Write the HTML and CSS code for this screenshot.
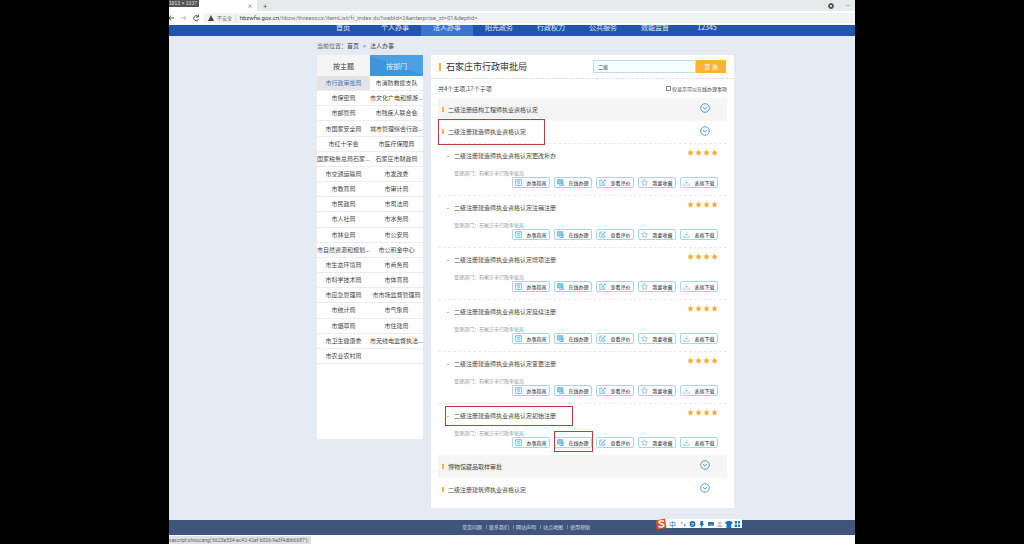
FILE: index.html
```html
<!DOCTYPE html>
<html lang="zh-CN">
<head>
<meta charset="utf-8">
<title>法人办事</title>
<link rel="stylesheet" href="styles.css">
</head>
<body>
<svg class="defs" aria-hidden="true">
  <symbol id="down" viewBox="0 0 20 20"><circle cx="10" cy="10" r="8.6" fill="none" stroke="#4b93cf" stroke-width="1.8"/><path d="M6 8.5l4 3.6 4-3.6" fill="none" stroke="#4b93cf" stroke-width="1.8"/></symbol>
  <symbol id="star" viewBox="0 0 20 20"><path d="M10 1l2.8 6 6.4.8-4.7 4.4 1.2 6.5-5.7-3.2-5.7 3.2 1.2-6.5L.8 7.8 7.2 7z" fill="#f0b040"/></symbol>
  <symbol id="guide" viewBox="0 0 20 20"><rect x="2" y="2" width="16" height="16" fill="none" stroke="#52b4df" stroke-width="2"/><path d="M6 2v5h8V2M6 11h8M6 14h8" fill="none" stroke="#52b4df" stroke-width="2"/></symbol>
  <symbol id="online" viewBox="0 0 20 20"><rect x="1" y="2" width="16" height="12" fill="#8fcdec" stroke="#52b4df" stroke-width="2"/><path d="M6 18h12M12 9l6 5v4" fill="none" stroke="#3ea2d8" stroke-width="2.4"/></symbol>
  <symbol id="review" viewBox="0 0 20 20"><path d="M11 3H2v15h14v-6M18 2L8 12l-2 4M4 6h5M12 15h4M16 1l3 3-9 9" fill="none" stroke="#52b4df" stroke-width="2"/></symbol>
  <symbol id="fav" viewBox="0 0 20 20"><path d="M10 1.5l2.6 5.6 6.1.7-4.5 4.2 1.2 6.2-5.4-3-5.4 3 1.2-6.2L1.3 7.8l6.1-.7z" fill="none" stroke="#52b4df" stroke-width="1.8"/></symbol>
  <symbol id="load" viewBox="0 0 20 20"><path d="M10 2v11M6 9l4 4 4-4M2 12v6h16v-6" fill="none" stroke="#72c2e4" stroke-width="1.8"/></symbol>
</svg>
<div class="screen">
  <header class="browser">
    <div class="tabs">
      <div class="tab"><button class="glyph close" aria-label="关闭">×</button></div>
      <button class="glyph plus" aria-label="新标签页">+</button>
      <svg class="win" viewBox="0 0 26 8"><circle cx="2" cy="4" r="2" fill="none" stroke="#555" stroke-width="1.800"/><path d="M17 3.500h4" stroke="#bbb"/></svg>
      <span class="size">1813 × 1037</span>
    </div>
    <div class="toolbar">
      <svg class="arrows" viewBox="0 0 34 10"><path d="M5 5H0M2 2.500L0 5l2 2.500" fill="none" stroke="#555"/><path d="M12 5h5M15 2.500L17 5l-2 2.500" fill="none" stroke="#bbb"/><path d="M29 3.500A2.500 2.500 0 1 0 29.500 6M29.500 1.500v2.500h-2.500" fill="none" stroke="#555"/></svg>
      <div class="address">
        <svg class="warn" viewBox="0 0 6 6"><path d="M3 0l3 6H0z" fill="#444"/></svg>
        <span class="safe">不安全</span><span class="bar">|</span>
        <span class="url"><b>hbzwfw.gov.cn</b>/hbzw/threesxcx/itemList/fr_index.do?webId=2&amp;enterprise_zt=01&amp;deptid=</span>
      </div>
    </div>
  </header>
  <nav class="nav">
    <a href="#">首页</a><a href="#">个人办事</a><a href="#" class="on">法人办事</a><a href="#">阳光政务</a><a href="#">行政权力</a><a href="#">公共服务</a><a href="#">效能监督</a><a href="#">12345</a>
  </nav>
  <main class="page">
    <div class="crumb">当前位置：<a href="#">首页</a><span class="sep">»</span><a href="#">法人办事</a></div>
    <div class="columns">
      <aside class="side">
        <div class="switch"><button>按主题</button><button class="on">按部门</button></div>
        <div class="depts">
          <a href="#" class="on">市行政审批局</a><a href="#">市消防救援支队</a>
          <a href="#">市保密局</a><a href="#">市文化广电和旅游...</a>
          <a href="#">市邮管局</a><a href="#">市残疾人联合会</a>
          <a href="#">市国家安全局</a><a href="#">城市管理综合行政...</a>
          <a href="#">市红十字会</a><a href="#">市医疗保障局</a>
          <a href="#">国家税务总局石家...</a><a href="#">石家庄市财政局</a>
          <a href="#">市交通运输局</a><a href="#">市发改委</a>
          <a href="#">市教育局</a><a href="#">市审计局</a>
          <a href="#">市民政局</a><a href="#">市司法局</a>
          <a href="#">市人社局</a><a href="#">市水务局</a>
          <a href="#">市林业局</a><a href="#">市公安局</a>
          <a href="#">市自然资源和规划...</a><a href="#">市公积金中心</a>
          <a href="#">市生态环境局</a><a href="#">市商务局</a>
          <a href="#">市科学技术局</a><a href="#">市体育局</a>
          <a href="#">市应急管理局</a><a href="#">市市场监督管理局</a>
          <a href="#">市统计局</a><a href="#">市气象局</a>
          <a href="#">市烟草局</a><a href="#">市住建局</a>
          <a href="#">市卫生健康委</a><a href="#">市无线电监督执法...</a>
          <a href="#">市农业农村局</a><span></span>
        </div>
      </aside>
      <section class="panel">
        <div class="head">
          <h1>石家庄市行政审批局</h1>
          <form class="search"><input type="text" value="二级" aria-label="事项名称"><button type="button">查 询</button></form>
        </div>
        <div class="body">
          <div class="info"><span>共4个主项,17个子项</span><label><input type="checkbox">仅显示可以在线办理事项</label></div>
          <div class="group shade"><h2>二级注册结构工程师执业资格认定</h2><svg><use href="#down"/></svg></div>
          <div class="group open"><h2>二级注册建造师执业资格认定</h2><svg><use href="#down"/></svg><i class="mark mark-group"></i></div>

          <article class="item">
            <div class="top"><h3>二级注册建造师执业资格认定更改补办</h3><div class="stars"><svg><use href="#star"/></svg><svg><use href="#star"/></svg><svg><use href="#star"/></svg><svg><use href="#star"/></svg></div></div>
            <p>受理部门：石家庄市行政审批局</p>
            <div class="acts"><button><svg><use href="#guide"/></svg>办事指南</button><button><svg><use href="#online"/></svg>在线办理</button><button><svg><use href="#review"/></svg>查看评价</button><button><svg><use href="#fav"/></svg>我要收藏</button><button><svg><use href="#load"/></svg>表格下载</button></div>
          </article>
          <article class="item">
            <div class="top"><h3>二级注册建造师执业资格认定注销注册</h3><div class="stars"><svg><use href="#star"/></svg><svg><use href="#star"/></svg><svg><use href="#star"/></svg><svg><use href="#star"/></svg></div></div>
            <p>受理部门：石家庄市行政审批局</p>
            <div class="acts"><button><svg><use href="#guide"/></svg>办事指南</button><button><svg><use href="#online"/></svg>在线办理</button><button><svg><use href="#review"/></svg>查看评价</button><button><svg><use href="#fav"/></svg>我要收藏</button><button><svg><use href="#load"/></svg>表格下载</button></div>
          </article>
          <article class="item">
            <div class="top"><h3>二级注册建造师执业资格认定增项注册</h3><div class="stars"><svg><use href="#star"/></svg><svg><use href="#star"/></svg><svg><use href="#star"/></svg><svg><use href="#star"/></svg></div></div>
            <p>受理部门：石家庄市行政审批局</p>
            <div class="acts"><button><svg><use href="#guide"/></svg>办事指南</button><button><svg><use href="#online"/></svg>在线办理</button><button><svg><use href="#review"/></svg>查看评价</button><button><svg><use href="#fav"/></svg>我要收藏</button><button><svg><use href="#load"/></svg>表格下载</button></div>
          </article>
          <article class="item">
            <div class="top"><h3>二级注册建造师执业资格认定延续注册</h3><div class="stars"><svg><use href="#star"/></svg><svg><use href="#star"/></svg><svg><use href="#star"/></svg><svg><use href="#star"/></svg></div></div>
            <p>受理部门：石家庄市行政审批局</p>
            <div class="acts"><button><svg><use href="#guide"/></svg>办事指南</button><button><svg><use href="#online"/></svg>在线办理</button><button><svg><use href="#review"/></svg>查看评价</button><button><svg><use href="#fav"/></svg>我要收藏</button><button><svg><use href="#load"/></svg>表格下载</button></div>
          </article>
          <article class="item">
            <div class="top"><h3>二级注册建造师执业资格认定变更注册</h3><div class="stars"><svg><use href="#star"/></svg><svg><use href="#star"/></svg><svg><use href="#star"/></svg><svg><use href="#star"/></svg></div></div>
            <p>受理部门：石家庄市行政审批局</p>
            <div class="acts"><button><svg><use href="#guide"/></svg>办事指南</button><button><svg><use href="#online"/></svg>在线办理</button><button><svg><use href="#review"/></svg>查看评价</button><button><svg><use href="#fav"/></svg>我要收藏</button><button><svg><use href="#load"/></svg>表格下载</button></div>
          </article>
          <article class="item last">
            <i class="mark mark-item"></i>
            <div class="top"><h3>二级注册建造师执业资格认定初始注册</h3><div class="stars"><svg><use href="#star"/></svg><svg><use href="#star"/></svg><svg><use href="#star"/></svg><svg><use href="#star"/></svg></div></div>
            <p>受理部门：石家庄市行政审批局</p>
            <div class="acts"><button><svg><use href="#guide"/></svg>办事指南</button><button><svg><use href="#online"/></svg>在线办理<i class="mark mark-btn"></i></button><button><svg><use href="#review"/></svg>查看评价</button><button><svg><use href="#fav"/></svg>我要收藏</button><button><svg><use href="#load"/></svg>表格下载</button></div>
          </article>

          <div class="group shade"><h2>博物馆藏品取样审批</h2><svg><use href="#down"/></svg></div>
          <div class="group"><h2>二级注册建筑师执业资格认定</h2><svg><use href="#down"/></svg></div>
        </div>
      </section>
    </div>
  </main>
  <footer class="foot">
    <a href="#">常见问题</a><a href="#">联系我们</a><a href="#">网站声明</a><a href="#">站点地图</a><a href="#">使用帮助</a>
  </footer>
  <div class="bottom"><span class="status">vascript:shoucang('6623e554-ac42-42ef-b026-9e3f4dbb6687');</span></div>
  <div class="ime">
    <svg class="sogou" viewBox="0 0 12 12"><path d="M1 2.500L10 .5l1.500 9.500L2 11.500z" fill="#e0522a"/><path d="M9 3.200C6 2.500 3.800 3 4 4.500s5 1 5 2.800-3 2-5.500 1.200" fill="none" stroke="#fff" stroke-width="1.400"/></svg>
    <span>中</span>
    <svg class="tools" viewBox="0 0 64 8"><g fill="#1672bd"><path d="M3 2l2 1-1 1zM6 4l2 1-1 2z"/><circle cx="15" cy="4" r="3"/><rect x="23" y="1" width="3" height="4" rx="1"/><path d="M22 4h5l-2 2v1.500h-1V6z"/><rect x="31" y="2" width="6" height="4"/><path d="M49 2l2-1h3l2 1v2h-1v4h-5V4h-1z"/><path d="M58.500 1h2.500v2.500h-2.500zM62 1h2v2.500h-2zM58.500 4.500h2.500V7h-2.500zM62 4.500h2V7h-2z"/></g><path d="M13.500 3.500h3M13.500 5h3" stroke="#fff" stroke-width=".6"/><path d="M32 5h4" stroke="#fff" stroke-width=".5"/><g fill="#c4c4c4"><circle cx="43" cy="3" r="1.700"/><path d="M40 7c0-3 6-3 6 0z"/></g></svg>
  </div>
</div>
</body>
</html>
```
FILE: styles.css
```css
* { box-sizing: border-box; }
body {
  margin: 0;
  padding: 0 169px;
  background: #000;
  color: #444;
  font: 6px/8px "Noto Sans CJK SC", sans-serif;
}
a { color: inherit; text-decoration: none; }
button, input { font: inherit; color: inherit; margin: 0; padding: 0; border: 0; background: none; }
h1, h2, h3, p { margin: 0; font-weight: 400; }
svg { flex: none; }
.defs { position: absolute; width: 0; height: 0; }
.screen {
  position: relative;
  display: flex;
  flex-direction: column;
  min-height: 100vh;
  overflow: hidden;
  background: #e6ebf3;
}

.tabs { position: relative; display: flex; align-items: center; height: 11px; background: #e5eaea; }
.tab { display: flex; align-items: center; justify-content: flex-end; width: 88px; height: 11px; padding-right: 4px; background: #fff; }
.glyph { font-size: 8px; line-height: 8px; color: #555; }
.close { font-size: 6px; }
.plus { margin-left: 6px; }
.win { width: 26px; height: 8px; margin-left: auto; overflow: visible; }
.size { position: absolute; left: 0; top: 0; height: 7px; padding-right: 2px; background: #555; color: #ddd; font: 5px/7px "Liberation Sans", sans-serif; }
.toolbar { display: flex; align-items: center; height: 14px; background: #fff; }
.arrows { width: 34px; height: 10px; }
.address { display: flex; flex: 1; align-items: center; gap: 3px; height: 10px; padding-left: 5px; border-radius: 5px 0 0 5px; background: #f1f3f3; color: #666; }
.warn { width: 6px; height: 6px; }
.safe { font-size: 5px; }
.bar { color: #bbb; }
.url { font: 6px/8px Roboto, sans-serif; color: #777; white-space: nowrap; }
.url b { font-weight: 400; color: #333; }

.nav { display: flex; height: 11px; padding-left: 148px; overflow: hidden; background: #2155ac; color: #e4ecf8; font-size: 7px; line-height: 5px; }
.nav a { width: 52px; text-align: center; }
.nav .on { background: #3c72d4; }

.page { flex: 1; padding: 0 121px 12px 148px; }
.crumb { height: 19px; line-height: 19px; color: #666; }
.crumb a { color: #444; }
.sep { margin: 0 4px; }
.columns { display: grid; grid-template-columns: 106px 1fr; gap: 8px; align-items: start; }

.side { min-height: 384px; background: #fff; }
.switch { display: grid; grid-template-columns: 1fr 1fr; height: 21px; background: #f5f5f5; font-size: 7px; }
.switch .on { color: #e8f3fc; background: linear-gradient(20deg, #3c95de 50%, #4ba1e3 50%); }
.depts { display: grid; grid-template-columns: 1fr 1fr; grid-auto-rows: 1fr; height: 288px; }
.depts > * { display: flex; align-items: center; justify-content: center; border-bottom: 1px solid #ececec; white-space: nowrap; }
.depts .on { background: #e3e4e5; color: #4478c8; }

.panel { background: #fff; }
.head { display: flex; align-items: center; justify-content: space-between; height: 24px; padding: 0 8px; border-bottom: 1px dashed #ddd; }
.head h1 { padding-left: 5px; color: #333; font-size: 9px; line-height: 10px; }
.head h1::before, .group h2::before { content: ""; display: inline-block; width: 2px; background: #f9b233; }
.head h1::before { height: 8px; margin: 0 5px 0 -5px; vertical-align: -1px; }
.search { display: flex; width: 133px; height: 13px; }
.search input { flex: 1; min-width: 0; padding-left: 4px; border: 1px solid #c8dcd8; background: #f3fefe; font-size: 5px; }
.search button { width: 30px; background: #ffb335; color: #fff; }
.body { padding: 0 7px 7px; }
.info { display: flex; align-items: center; justify-content: space-between; height: 19px; }
.info label { display: flex; align-items: center; gap: 1px; font-size: 5px; }
.info input { appearance: none; width: 5px; height: 5px; border: 1px solid #888; background: #fff; }
.group { position: relative; display: flex; align-items: center; justify-content: space-between; height: 23px; padding: 0 17px 0 4px; }
.group h2 { font-size: 6px; line-height: 8px; }
.group h2::before { height: 5px; margin-right: 4px; }
.group svg { width: 10px; height: 10px; margin-bottom: 3px; }
.shade { background: #f5f5f5; }
.open { border-bottom: 1px dashed #e9e9e9; }

.item { position: relative; height: 52px; padding: 5px 9px 0 16px; border-bottom: 1px dashed #e9e9e9; }
.item.last { height: 51px; border-bottom: 0; }
.top { display: flex; justify-content: space-between; }
.item h3 { padding-top: 3px; font-size: 6px; line-height: 8px; }
.item h3::before { content: ""; float: left; width: 2px; height: 1px; margin: 4px 0 0 -7px; background: #f9b233; }
.stars { display: flex; gap: 1px; }
.stars svg { width: 7px; height: 7px; }
.item p { padding-top: 9px; color: #999; font-size: 5px; line-height: 8px; }
.acts { display: flex; justify-content: flex-end; gap: 4px; }
.acts button { position: relative; display: flex; align-items: center; justify-content: center; gap: 4px; width: 38px; height: 11px; border: 1px solid #a5d8e6; border-radius: 2px; font-size: 5px; white-space: nowrap; color: #222; }
.acts svg { width: 7px; height: 7px; }

.mark { position: absolute; z-index: 1; border: 1px solid #c03c3c; }
.mark-group { left: 0; top: -2px; width: 107px; height: 26px; }
.mark-item { left: 7px; top: 2px; width: 128px; height: 20px; }
.mark-btn { left: -1px; top: -7px; width: 39px; height: 21px; }

.foot { display: flex; height: 15px; padding-left: 290px; background: #40557b; color: #d5dbe6; font-size: 5px; line-height: 14px; }
.foot a { width: 27px; padding-left: 3px; }
.foot a + a { background: linear-gradient(#7d8ba5, #7d8ba5) left 5px / 1px 4px no-repeat; }
.bottom { display: flex; align-items: flex-end; height: 9px; background: #fff; }
.status { height: 8px; padding-right: 2px; background: #dfe1e5; color: #666; font: 5px/8px Roboto, sans-serif; }
.ime { position: absolute; right: 113px; bottom: 16px; display: flex; align-items: center; gap: 2px; height: 9px; padding-right: 2px; background: linear-gradient(90deg, transparent 6px, #fff 6px); color: #1672bd; font-size: 7px; }
.sogou { width: 12px; height: 12px; }
.tools { width: 62px; height: 8px; }
```
